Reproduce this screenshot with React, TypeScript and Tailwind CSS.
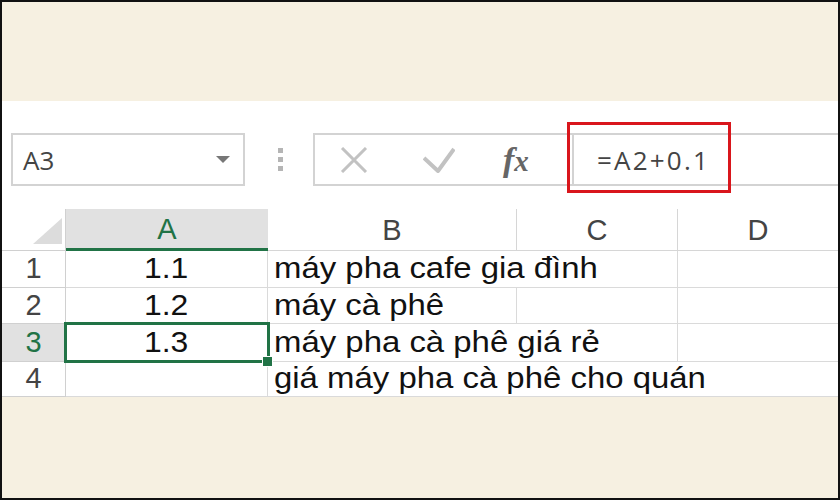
import React from "react";

const cellFont = { fontFamily: '"Liberation Sans", Arial, sans-serif' };

type Row = { n: string; a: string; b: string; bLine: boolean; cLine: boolean; h: string; sel?: boolean };

const rows: Row[] = [
  { n: "1", a: "1.1", b: "máy pha cafe gia đình", bLine: false, cLine: true, h: "h-[37px]" },
  { n: "2", a: "1.2", b: "máy cà phê", bLine: true, cLine: true, h: "h-[36px]" },
  { n: "3", a: "1.3", b: "máy pha cà phê giá rẻ", bLine: false, cLine: true, h: "h-[38px]", sel: true },
  { n: "4", a: "", b: "giá máy pha cà phê cho quán", bLine: false, cLine: false, h: "h-[35px]" },
];

export default function App() {
  return (
    <div className="w-[840px] h-[500px] border-2 border-[#111] bg-[#f6f0e1] flex flex-col overflow-hidden">
      <div className="h-[99px] shrink-0" />
      <div className="h-[296px] shrink-0 bg-white flex flex-col overflow-hidden">
        {/* formula bar */}
        <div className="mt-[32px] h-[53px] flex items-stretch">
          <div className="ml-[9px] w-[234px] border-2 border-[#d3d3d3] flex items-center justify-between pl-[10px] pr-[13px]">
            <span className="text-[26px] text-[#444] leading-none" style={{ fontFamily: '"Open Sans", sans-serif' }}>A3</span>
            <svg width="14" height="7" viewBox="0 0 14 7"><path d="M0 0 L14 0 L7 7 Z" fill="#777" /></svg>
          </div>
          <div className="ml-[32px] w-[6px] flex flex-col items-center justify-center gap-[4px]">
            <div className="w-[5px] h-[5px] bg-[#b5b5b5]" />
            <div className="w-[5px] h-[5px] bg-[#b5b5b5]" />
            <div className="w-[5px] h-[5px] bg-[#b5b5b5]" />
          </div>
          <div className="ml-[30px] flex-1 border-2 border-r-0 border-[#d3d3d3] flex items-stretch">
            <div className="w-[257px] flex items-center">
              <svg className="ml-[25px]" width="28" height="26" viewBox="0 0 28 26">
                <path d="M2 1 L26 25 M26 1 L2 25" stroke="#c2c2c2" strokeWidth="3" fill="none" />
              </svg>
              <svg className="ml-[55px]" width="32" height="26" viewBox="0 0 32 26">
                <path d="M1 11 L15 24 L31 2" stroke="#c2c2c2" strokeWidth="4" fill="none" strokeLinejoin="round" />
              </svg>
              <span className="ml-[48px] text-[#666] italic font-bold leading-none text-[34px]" style={{ fontFamily: '"Liberation Serif", "Times New Roman", serif' }}>
                f<span className="text-[29px]">x</span>
              </span>
            </div>
            <div className="relative flex-1 border-l-2 border-[#d3d3d3] flex items-center pl-[23px]">
              <span className="text-[26px] tracking-[2.2px] text-[#444] leading-none" style={{ fontFamily: '"Open Sans", sans-serif' }}>=A2+0.1</span>
              <div className="absolute left-[-7px] top-[-13px] w-[164px] h-[71px] border-[3px] border-[#d9161c]" />
            </div>
          </div>
        </div>

        {/* grid */}
        <div className="mt-[23px] flex flex-col" style={cellFont}>
          <div className="h-[42px] flex">
            <div className="w-[64px] border-r border-b border-[#d0d0d0] flex items-end justify-end pr-[3px] pb-[6px]">
              <svg width="29" height="26" viewBox="0 0 29 26"><path d="M29 0 L29 26 L0 26 Z" fill="#dcdcdc" /></svg>
            </div>
            <div className="w-[202px] bg-[#e1e1e1] border-b-[3px] border-[#217346] flex items-center justify-center pt-[3px] text-[29px] text-[#217346]">A</div>
            <div className="w-[249px] border-r border-b border-[#d6d6d6] flex items-center justify-center pt-[3px] text-[29px] text-[#444]">B</div>
            <div className="w-[161px] border-r border-b border-[#d6d6d6] flex items-center justify-center pt-[3px] text-[29px] text-[#444]">C</div>
            <div className="flex-1 border-b border-[#d6d6d6] flex items-center justify-center pt-[3px] text-[29px] text-[#444]">D</div>
          </div>
          {rows.map((r) => (
            <div key={r.n} className={`${r.h} flex`}>
              <div
                className={`w-[64px] border-r border-b border-[#d0d0d0] flex items-center justify-center text-[29px] ${
                  r.sel ? "bg-[#e1e1e1] text-[#217346]" : "text-[#444]"
                }`}
              >
                {r.n}
              </div>
              <div className="relative w-[202px] border-r border-b border-[#dadada] flex items-center justify-center text-[29px] text-[#111]">
                <span className="scale-x-[1.1]">{r.a}</span>
                {r.sel && (
                  <>
                    <div className="absolute z-10 left-[-2px] top-[-2px] right-[-3px] bottom-[-2px] border-[3px] border-[#217346]" />
                    <div className="absolute z-20 left-[196px] top-[32px] w-[11px] h-[11px] bg-[#217346] border border-white" />
                  </>
                )}
              </div>
              <div className={`w-[249px] border-b border-[#dadada] ${r.bLine ? "border-r" : ""} flex items-center pl-[6px]`}>
                <span className="whitespace-nowrap text-[29px] text-[#111] scale-x-[1.135] origin-left">{r.b}</span>
              </div>
              <div className={`w-[161px] border-b border-[#dadada] ${r.cLine ? "border-r" : ""}`} />
              <div className="flex-1 border-b border-[#dadada]" />
            </div>
          ))}
        </div>
      </div>
      <div className="flex-1" />
    </div>
  );
}
